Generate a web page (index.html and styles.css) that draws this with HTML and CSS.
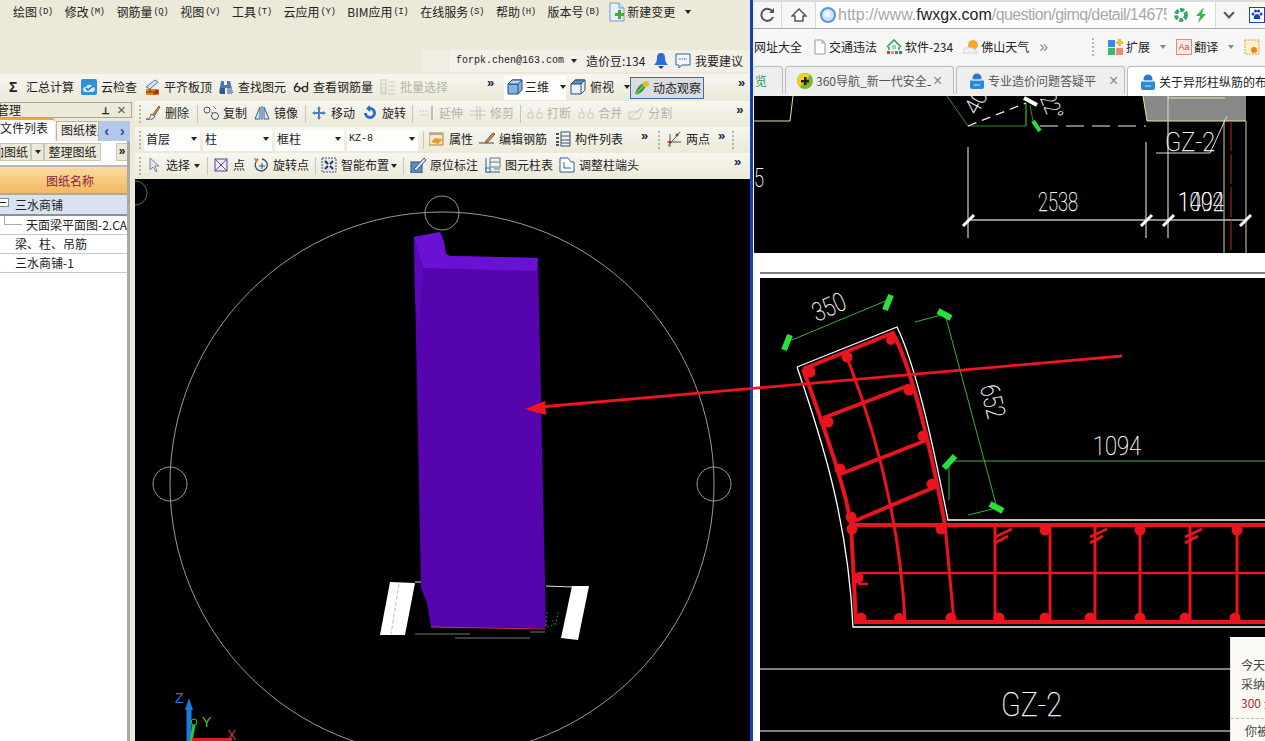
FILE: index.html
```html
<!DOCTYPE html>
<html lang="zh">
<head>
<meta charset="utf-8">
<title>钢筋算量</title>
<link rel="stylesheet" href="styles.css">
</head>
<body>
<svg class="defs" width="0" height="0">
<defs>
<symbol id="i-cloud" viewBox="0 0 16 16"><rect x="0" y="0" width="16" height="16" rx="2" fill="#2f8fd8"/><path d="M2 11c0-3 2-3 3-3 1-3 6-3 7 0 2 0 3 4 0 5H4c-1 0-2-1-2-2z" fill="#cfe8fa"/><path d="M5 9l2 2 5-4" fill="none" stroke="#1a6fb8" stroke-width="1.5"/></symbol>
<symbol id="i-align" viewBox="0 0 16 16"><rect x="2" y="10" width="13" height="6" fill="#d8861e"/><path d="M2 13h13M6 10v3M10 13v3" stroke="#8b2a10"/><rect x="11" y="11" width="3" height="4" fill="#b8281a"/><path d="M2 8L11 1l3 2-8 7z" fill="#cfe0ef" stroke="#4f7fa8"/></symbol>
<symbol id="i-find" viewBox="0 0 16 16"><path d="M3 2h3v4h3V2h3l3 12H9V9H7v5H1z" fill="#4a78b8"/><rect x="2" y="9" width="5" height="6" fill="#30588f"/><rect x="9" y="9" width="5" height="6" fill="#8a9fb8"/></symbol>
<symbol id="i-glass" viewBox="0 0 16 16"><g fill="none" stroke="#333" stroke-width="1.4"><circle cx="4" cy="10" r="2.6"/><circle cx="12" cy="10" r="2.6"/><path d="M5 4C3 5 2 7 1.500 9M14.500 3v7M7 9.500c1-.5 1-.5 2 0"/></g></symbol>
<symbol id="i-batch" viewBox="0 0 16 16"><g fill="none" stroke="#c8c8c0"><rect x="1" y="1" width="5" height="14"/><path d="M1 5h5M1 9h5M1 13h5M8 3h7M8 7h7M8 11h7M8 15h7"/></g></symbol>
<symbol id="i-cube" viewBox="0 0 16 16"><path d="M1 5l4-4h10v10l-4 4H1z" fill="#7fb4e0" stroke="#2a4f78"/><path d="M1 5h10v10M11 5l4-4" fill="none" stroke="#2a4f78"/><path d="M1 5l4-4h10l-4 4z" fill="#b4d6f0" stroke="#2a4f78"/></symbol>
<symbol id="i-cubew" viewBox="0 0 16 16"><path d="M1 5l4-4h10v10l-4 4H1z" fill="#e8f0f8" stroke="#2a4f78"/><path d="M1 5l4-4h10l-4 4z" fill="#5f90c0" stroke="#2a4f78"/><path d="M11 5v10M11 5l4-4" fill="none" stroke="#2a4f78"/></symbol>
<symbol id="i-orbit" viewBox="0 0 16 16"><path d="M1 15C2 8 6 3 12 3c0 6-4 10-11 12z" fill="#3f9a3a"/><path d="M1 15L12 3" stroke="#a8d8a0"/><circle cx="12" cy="4" r="3" fill="#e0c020"/></symbol>
<symbol id="i-brush" viewBox="0 0 16 16"><path d="M8 9L14 1l1 1-5 8z" fill="#c84" stroke="#864"/><path d="M1 14c3 0 4-1 5-5l4 2c-1 3-4 4-9 3z" fill="#e8e0f0" stroke="#657"/></symbol>
<symbol id="i-copy" viewBox="0 0 16 16"><g fill="none" stroke="#456"><circle cx="4" cy="5" r="3"/><circle cx="12" cy="11" r="3.500"/><path d="M8 7l2 1M10 1l3 3" stroke="#68a"/></g></symbol>
<symbol id="i-mirror" viewBox="0 0 16 16"><path d="M6 2v12H1z" fill="#dbe7f3" stroke="#2a5f98"/><path d="M10 2v12h5z" fill="#dbe7f3" stroke="#2a5f98"/><path d="M8 1v14" stroke="#2a5f98"/></symbol>
<symbol id="i-move" viewBox="0 0 16 16"><path d="M8 1l2 3H9v3h3V6l3 2-3 2V9H9v3h1l-2 3-2-3h1V9H4v1L1 8l3-2v1h3V4H6z" fill="#4f81b8"/></symbol>
<symbol id="i-rotate" viewBox="0 0 16 16"><path d="M8 2a6 6 0 1 1-6 6h3a3 3 0 1 0 3-3v2L4 3.500 8 0z" fill="#2a6fc0"/></symbol>
<symbol id="i-extend" viewBox="0 0 16 16"><path d="M0 6h10M0 10h10" stroke="#c8c8c0" stroke-dasharray="2 1"/><path d="M13 1v14" stroke="#c0c0b8" stroke-width="2"/></symbol>
<symbol id="i-trim" viewBox="0 0 16 16"><path d="M0 6h16M0 10h16" stroke="#c8c8c0"/><path d="M7 1v14M10 1v14" stroke="#c0c0b8"/></symbol>
<symbol id="i-break" viewBox="0 0 16 16"><path d="M1 8h5v5H1zM10 8h5v5h-5zM3 3l2 4M13 3l-2 4" fill="none" stroke="#c8c8c0"/></symbol>
<symbol id="i-split" viewBox="0 0 16 16"><path d="M1 14V7h9l3-4 2 2-4 9z" fill="none" stroke="#c8c8c0"/><path d="M1 14L13 3" stroke="#c8c8c0"/></symbol>
<symbol id="i-prop" viewBox="0 0 16 16"><path d="M0 2h14v12H0z" fill="#fbe8c0" stroke="#b08030"/><path d="M0 2h14v2H0z" fill="#a8a8b0"/><path d="M2 11l4-4 8 1-5 5z" fill="#e0a030"/></symbol>
<symbol id="i-edit" viewBox="0 0 16 16"><path d="M0 12h15" stroke="#444"/><path d="M6 11L14 2l2 1-8 9z" fill="#c89050" stroke="#753"/></symbol>
<symbol id="i-list" viewBox="0 0 16 16"><g fill="none" stroke="#456"><rect x="6" y="1" width="9" height="14" fill="#eef3f8"/><path d="M6 5h9M6 9h9M6 12h9"/><path d="M1 3h3M1 7h3M1 11h3M1 14h3" stroke-width="2"/></g></symbol>
<symbol id="i-two" viewBox="0 0 16 16"><path d="M1 11h14M4 3v13M14 1L2 15" fill="none" stroke="#555"/><circle cx="4" cy="11" r="1.500" fill="#a33"/><circle cx="11" cy="4" r="1.500" fill="#a33"/></symbol>
<symbol id="i-cursor" viewBox="0 0 16 16"><path d="M4 1v12l3-3 3 5 1-1-2-5h4z" fill="#dde4ec" stroke="#7a8a9a"/></symbol>
<symbol id="i-point" viewBox="0 0 16 16"><rect x="2" y="2" width="12" height="12" fill="#e8eef8" stroke="#3a4fa0"/><path d="M2 2l12 12M14 2L2 14" stroke="#a03a50"/></symbol>
<symbol id="i-rotp" viewBox="0 0 16 16"><path d="M3 5a6 6 0 1 0 6-3" fill="none" stroke="#2a4f78" stroke-width="1.300"/><path d="M1 1l5 1-3 4z" fill="#d08020"/><path d="M9 6v6M6 9h6" stroke="#2a4f78"/></symbol>
<symbol id="i-smart" viewBox="0 0 16 16"><rect x="1" y="1" width="14" height="14" fill="#dfe8f0" stroke="#555" stroke-dasharray="2 1"/><path d="M4 4l3 3M12 4L9 7M4 12l3-3M12 12L9 9" stroke="#334" stroke-width="2"/></symbol>
<symbol id="i-orig" viewBox="0 0 16 16"><rect x="1" y="5" width="11" height="11" fill="#5f8fc0" stroke="#2a4f78"/><path d="M4 12L14 1l2 2L6 14z" fill="#dce8f4" stroke="#2a4f78"/></symbol>
<symbol id="i-coltb" viewBox="0 0 16 16"><path d="M1 1v14h14" fill="none" stroke="#2a5f98"/><rect x="1" y="11" width="4" height="4" fill="#fff" stroke="#2a5fb0"/><rect x="5" y="1" width="10" height="9" fill="#eef3f8" stroke="#678"/><path d="M5 5h10M9 12h6" stroke="#678"/></symbol>
<symbol id="i-adj" viewBox="0 0 16 16"><path d="M1 15V1h8l3 4h3v10z" fill="#fff" stroke="#2a5f98"/><path d="M5 5v6h7" fill="none" stroke="#2a5f98"/></symbol>
<symbol id="i-new" viewBox="0 0 16 20"><path d="M1 1h9l5 5v13H1z" fill="#e6f0fa" stroke="#6f9fc8"/><path d="M10 1v5h5" fill="#cfe2f4" stroke="#6f9fc8"/><path d="M9 8h3v3h3v3h-3v3H9v-3H6v-3h3z" fill="#4aa83a"/></symbol>
<symbol id="i-bell" viewBox="0 0 16 16"><path d="M8 0c3 0 4 2 4 5 0 3 1 5 3 7H1c2-2 3-4 3-7 0-3 1-5 4-5z" fill="#2a6fd8"/><path d="M5 13h6l-3 3z" fill="#1a3f88"/></symbol>
<symbol id="i-msg" viewBox="0 0 16 16"><path d="M1 1h14v11H7l-3 3v-3H1z" fill="#f4f8fc" stroke="#2a5f98"/><path d="M4 6h8" stroke="#2a5f98" stroke-dasharray="1.500 1"/></symbol>
<symbol id="i-reload" viewBox="0 0 16 16"><path d="M13 4a6 6 0 1 0 1 6" fill="none" stroke="#555" stroke-width="2"/><path d="M10 6h5V1z" fill="#555"/></symbol>
<symbol id="i-home" viewBox="0 0 16 16"><path d="M8 2L1 9h3v5h8V9h3z" fill="#fff" stroke="#555" stroke-width="1.500"/></symbol>
<symbol id="i-globe" viewBox="0 0 16 16"><circle cx="8" cy="8" r="7" fill="#cfe4fb" stroke="#5a94d8" stroke-width="2"/><circle cx="7" cy="7" r="3" fill="#eef6ff"/></symbol>
<symbol id="i-ring" viewBox="0 0 16 16"><circle cx="8" cy="8" r="5" fill="none" stroke="#3aa86a" stroke-width="4" stroke-dasharray="4 1.500"/></symbol>
<symbol id="i-bolt" viewBox="0 0 16 16"><path d="M11 0L3 9h4l-2 7 8-9H9z" fill="#3ab84a"/></symbol>
<symbol id="i-paw" viewBox="0 0 16 16"><rect x="0" y="0" width="16" height="16" fill="#fff" stroke="#1a3fc0" stroke-width="2"/><g fill="#1a3fc0"><circle cx="4" cy="7" r="1.500"/><circle cx="12" cy="7" r="1.500"/><circle cx="6.500" cy="4" r="1.500"/><circle cx="9.500" cy="4" r="1.500"/><path d="M8 7c2 0 4 3 3 5H5c-1-2 1-5 3-5z"/></g></symbol>
<symbol id="i-doc" viewBox="0 0 16 16"><path d="M3 1h7l3 3v11H3z" fill="#fff" stroke="#999"/><path d="M10 1v3h3" fill="none" stroke="#999"/></symbol>
<symbol id="i-house" viewBox="0 0 16 16"><path d="M1 8l7-7 7 7M3 8v3M13 8v3" fill="none" stroke="#3a9a4a" stroke-width="1.500"/><rect x="6" y="6" width="4" height="4" fill="#9cc"/><path d="M1 12h3v3H1z" fill="#d83a3a"/><path d="M5 12h3v3H5z" fill="#d8a83a"/><path d="M9 12h3v3H9z" fill="#3a9a4a"/><path d="M13 12h3v3h-3z" fill="#3a6ad8"/></symbol>
<symbol id="i-sun" viewBox="0 0 16 16"><circle cx="10" cy="6" r="5" fill="#f8a830"/><path d="M0 14c0-4 3-6 6-5 2-1 5 0 6 3 2 0 3 1 3 2z" fill="#eef2f6" stroke="#c8d4e0"/></symbol>
<symbol id="i-ext" viewBox="0 0 16 16"><rect x="0" y="1" width="7" height="7" fill="#3a8ad8"/><rect x="0" y="9" width="7" height="7" fill="#3ab86a"/><rect x="8" y="9" width="7" height="7" fill="#f08878"/><path d="M10 0h3v2h2v3h-2v2h-3V5H8V2h2z" fill="#f0c030"/></symbol>
<symbol id="i-cal" viewBox="0 0 16 16"><rect x="1" y="1" width="14" height="14" fill="#fbf0c8" stroke="#d8a83a" stroke-dasharray="2 1"/><circle cx="10" cy="11" r="3" fill="#e88a20"/></symbol>
<symbol id="i-360" viewBox="0 0 16 16"><circle cx="8" cy="8" r="8" fill="#7ab82a"/><path d="M0 8a8 8 0 0 1 13-6L3 14A8 8 0 0 1 0 8z" fill="#f0d020"/><path d="M7 4h2.500v3H12v2.500H9.500V12H7V9.500H4V7h3z" fill="#222"/></symbol>
<symbol id="i-lock" viewBox="0 0 16 16"><circle cx="8" cy="5" r="4.500" fill="#2a7ac8"/><rect x="1" y="7" width="14" height="9" rx="2" fill="#2a8ad8"/><path d="M3 7h10" stroke="#cfe8fa" stroke-width="1.500"/><path d="M5 12h6" stroke="#cfe8fa"/></symbol>
</defs>
</svg>

<div class="screen">
  <section class="app">
    <header class="menubar">
      <span>绘图<i>(D)</i></span><span>修改<i>(M)</i></span><span>钢筋量<i>(Q)</i></span><span>视图<i>(V)</i></span><span>工具<i>(T)</i></span><span>云应用<i>(Y)</i></span><span>BIM应用<i>(I)</i></span><span>在线服务<i>(S)</i></span><span>帮助<i>(H)</i></span><span>版本号<i>(B)</i></span>
      <span class="newchg"><svg class="ic20"><use href="#i-new"/></svg>新建变更<b class="dd ml8"></b></span>
    </header>
    <div class="userrow">
      <div class="ublank"></div>
      <div class="ubar">
        <span class="email">forpk.chen@163.com</span><b class="dd ml7"></b>
        <span class="ml9 bean">造价豆:134</span>
        <svg class="ic ml7"><use href="#i-bell"/></svg>
        <svg class="ic ml6"><use href="#i-msg"/></svg>
        <span class="ml4">我要建议</span>
      </div>
    </div>
    <div class="tb tb1">
      <span class="tool"><b class="sigma">Σ</b>汇总计算</span>
      <span class="tool ml7"><svg class="ic"><use href="#i-cloud"/></svg>云检查</span>
      <span class="tool ml7"><svg class="ic"><use href="#i-align"/></svg>平齐板顶</span>
      <span class="tool ml6"><svg class="ic"><use href="#i-find"/></svg>查找图元</span>
      <span class="tool ml7"><svg class="ic"><use href="#i-glass"/></svg>查看钢筋量</span>
      <span class="tool off ml7"><svg class="ic"><use href="#i-batch"/></svg>批量选择</span>
      <span class="more ml39">»</span>
      <span class="tool box3d ml7"><svg class="ic"><use href="#i-cube"/></svg>三维<b class="dd ml9"></b></span>
      <span class="tool ml4"><svg class="ic"><use href="#i-cubew"/></svg>俯视<b class="dd ml6"></b></span>
      <span class="tool active"><svg class="ic"><use href="#i-orbit"/></svg>动态观察</span>
      <span class="more ml34">»</span>
    </div>

    <div class="main">
      <aside class="side">
        <div class="side-title"><span class="clip2">管理</span><span class="pin">⊥</span><span class="close">×</span></div>
        <div class="side-tabs">
          <span class="tab-on">文件列表</span>
          <span class="tab-off">图纸楼层</span>
          <span class="tab-nav"><b>‹</b><b>›</b></span>
        </div>
        <div class="side-panel">
          <div class="side-btns">
            <span class="sb sb1"><span class="clip16">添加图纸</span></span><span class="sb sb2"><b class="dd"></b></span><span class="sb sb3">整理图纸</span><span class="sb4">»</span>
          </div>
          <div class="grid-head">图纸名称</div>
          <div class="row row-sel"><span class="minus"></span>三水商铺</div>
          <div class="row row-sub"><span class="branch"></span>天面梁平面图-2.CAD</div>
          <div class="row">梁、柱、吊筋</div>
          <div class="row">三水商铺-1</div>
        </div>
      </aside>
      <div class="work">
        <div class="tb">
          <span class="hd ml4"></span>
          <span class="tool ml4"><svg class="ic"><use href="#i-brush"/></svg>删除</span>
          <span class="sep ml8"></span>
          <span class="tool ml5"><svg class="ic"><use href="#i-copy"/></svg>复制</span>
          <span class="tool ml7"><svg class="ic"><use href="#i-mirror"/></svg>镜像</span>
          <span class="sep ml7"></span>
          <span class="tool ml5"><svg class="ic"><use href="#i-move"/></svg>移动</span>
          <span class="tool ml7"><svg class="ic"><use href="#i-rotate"/></svg>旋转</span>
          <span class="sep ml6"></span>
          <span class="tool off ml6"><svg class="ic"><use href="#i-extend"/></svg>延伸</span>
          <span class="tool off ml7"><svg class="ic"><use href="#i-trim"/></svg>修剪</span>
          <span class="sep ml6"></span>
          <span class="tool off ml6"><svg class="ic"><use href="#i-break"/></svg>打断</span>
          <span class="tool off ml7"><svg class="ic"><use href="#i-break"/></svg>合并</span>
          <span class="tool off ml6"><svg class="ic"><use href="#i-split"/></svg>分割</span>
          <span class="more ml64">»</span>
        </div>
        <div class="tb">
          <span class="hd ml4"></span>
          <span class="sel w56 ml3">首层<b class="dd"></b></span>
          <span class="sel w69 ml3">柱<b class="dd"></b></span>
          <span class="sel w69 ml3">框柱<b class="dd"></b></span>
          <span class="sel w71 ml3 mono">KZ-8<b class="dd"></b></span>
          <span class="sep ml5"></span>
          <span class="tool ml5"><svg class="ic"><use href="#i-prop"/></svg>属性</span>
          <span class="tool ml6"><svg class="ic"><use href="#i-edit"/></svg>编辑钢筋</span>
          <span class="tool ml8"><svg class="ic"><use href="#i-list"/></svg>构件列表</span>
          <span class="more ml18">»</span>
          <span class="hd ml7"></span>
          <span class="tool ml6"><svg class="ic"><use href="#i-two"/></svg>两点</span>
          <span class="more ml8">»</span>
          <span class="hd ml4"></span>
        </div>
        <div class="tb">
          <span class="hd ml4"></span>
          <span class="tool ml5"><svg class="ic"><use href="#i-cursor"/></svg>选择</span><b class="dd ml4"></b>
          <span class="sep ml7"></span>
          <span class="tool ml5"><svg class="ic"><use href="#i-point"/></svg>点</span>
          <span class="tool ml8"><svg class="ic"><use href="#i-rotp"/></svg>旋转点</span>
          <span class="sep ml6"></span>
          <span class="tool ml5"><svg class="ic"><use href="#i-smart"/></svg>智能布置</span><b class="dd ml2"></b>
          <span class="sep ml6"></span>
          <span class="tool ml6"><svg class="ic"><use href="#i-orig"/></svg>原位标注</span>
          <span class="tool ml7"><svg class="ic"><use href="#i-coltb"/></svg>图元柱表</span>
          <span class="tool ml6"><svg class="ic"><use href="#i-adj"/></svg>调整柱端头</span>
          <span class="more ml95">»</span>
        </div>
        <svg class="canvas" viewBox="135 179 615 562">
          <rect x="135" y="179" width="615" height="562" fill="#000"/>
          <path d="M135 181a12 12 0 0 1 0 24" fill="none" stroke="#2a8a3a"/>
          <g fill="none" stroke="#9a9a9a">
            <circle cx="442" cy="484" r="272"/>
            <circle cx="442" cy="213" r="17"/>
            <circle cx="170" cy="484" r="17"/>
            <circle cx="714" cy="484" r="17"/>
          </g>
          <path d="M390 582L415 583 405 635H380z" fill="#fff"/>
          <path d="M399 584L391 634" stroke="#bbb" stroke-dasharray="4 2"/>
          <path d="M572 586H589L578 640 561 638z" fill="#fff"/>
          <path d="M415 582L430 582M546 586L572 587" stroke="#ddd"/>
          <path d="M414 237L440 232 444 242 446 254 450 256 538 258 546 628 431 627 427 603 421 588z" fill="#5504ae"/>
          <path d="M414 237L440 232 444 242 446 254 450 256 538 258 536 271 423 268z" fill="#6a12d4"/>
          <path d="M414 237L423 268 419 330 415 300z" fill="#5c08bc"/>
          <path d="M431 627L545 629" stroke="#d83050"/>
          <path d="M415 634H470M455 638H530M530 632H545" stroke="#777"/>
          <path d="M547 612l-1 15 10-3 2-12M552 620l4 5" fill="none" stroke="#2a7a3a" stroke-dasharray="2 2"/>
          <g class="axis">
            <text x="175" y="703" fill="#2a7ad8" font-size="14">Z</text>
            <path d="M189 741V710" stroke="#1a7ae0" stroke-width="5"/>
            <path d="M189 698l-4 12h8z" fill="#1a7ae0"/>
            <path d="M191 741L194 725" stroke="#2ac83a" stroke-width="3"/>
            <circle cx="194" cy="722" r="3" fill="none" stroke="#2ac83a"/>
            <text x="202" y="727" fill="#3ac84a" font-size="14">Y</text>
            <path d="M192 740H232" stroke="#e01a1a" stroke-width="4"/>
            <text x="227" y="740" fill="#c83a3a" font-size="14">X</text>
          </g>
        </svg>
      </div>
    </div>
  </section>

  <div class="divider"></div>

  <section class="browser">
    <div class="addr">
      <svg class="ic ml6"><use href="#i-reload"/></svg>
      <span class="vsep ml6"></span>
      <svg class="ic ml9"><use href="#i-home"/></svg>
      <div class="url">
        <svg class="ic"><use href="#i-globe"/></svg>
        <span class="urltext">http://www.<em>fwxgx.com</em><span class="tail">/question/gimq/detail/146753</span></span>
        <svg class="ic ml6"><use href="#i-ring"/></svg>
        <svg class="ic ml4"><use href="#i-bolt"/></svg>
      </div>
      <span class="chev"></span>
      <svg class="ic ml6 paw"><use href="#i-paw"/></svg>
    </div>
    <div class="bms">
      <span class="clip1">网址大全</span>
      <svg class="ic ml10"><use href="#i-doc"/></svg><span class="ml1">交通违法</span>
      <svg class="ic ml9"><use href="#i-house"/></svg><span class="ml3 mix">软件-234</span>
      <svg class="ic ml10"><use href="#i-sun"/></svg><span class="ml2">佛山天气</span>
      <span class="bmore ml10">»</span>
      <span class="hd ml44"></span>
      <svg class="ic ml14"><use href="#i-ext"/></svg><span class="ml2">扩展</span><b class="dd ml10 gray"></b>
      <span class="aa ml10">Aa</span><span class="ml2">翻译</span><b class="dd ml10 gray"></b>
      <svg class="ic ml10"><use href="#i-cal"/></svg>
    </div>
    <div class="tabs">
      <span class="btab b0">览</span>
      <span class="btab b1"><svg class="ic"><use href="#i-360"/></svg><span class="tname">360导航_新一代安全上网导航</span><span class="x">×</span></span>
      <span class="btab b2"><svg class="ic"><use href="#i-lock"/></svg><span class="tname">专业造价问题答疑平台</span><span class="x">×</span></span>
      <span class="btab b3"><svg class="ic"><use href="#i-lock"/></svg><span class="tname">关于异形柱纵筋的布置</span></span>
    </div>
    <div class="page">
      <svg class="cad" viewBox="753 96 512 645">
        <rect x="753" y="96" width="512" height="645" fill="#fff"/>
        <rect x="754" y="96" width="511" height="157" fill="#000"/>
        <path d="M760 273H1265" stroke="#000"/>
        <rect x="760" y="278" width="505" height="463" fill="#000"/>

        <!-- upper drawing -->
        <path d="M754 121H790L793 96" fill="none" stroke="#e8e89a"/>
        <path d="M947 96L968 126H1026V103M1026 103V126" fill="none" stroke="#3a8a3a"/>
        <path d="M968 126L1026 103" stroke="#eee" stroke-dasharray="9 6" stroke-width="1.300"/>
        <path d="M1024 98L1037 105" stroke="#fff" stroke-width="4"/>
        <path d="M1033 121L1040 131" stroke="#2ae03a" stroke-width="4"/>
        <path d="M1030 105L1033 121" stroke="#3a8a3a"/>
        <path d="M1040 126H1146" stroke="#eee" stroke-dasharray="18 8" stroke-width="1.200"/>
        <path d="M1143 96L1147 121H1246V96z" fill="#888"/>
        <path d="M1143 96L1147 121M1147 121H1246M1168 96V98H1225" fill="none" stroke="#e8e89a"/>
        <path d="M968 147V238M1146 142V238M1168 96V238" stroke="#ccc" stroke-width="1.200"/>
        <path d="M968 220H1245" stroke="#bbb" stroke-width="1.500"/>
        <path d="M1224 121V253M1246 121V253" stroke="#d8d09a"/>
        <path d="M1231 121V253" stroke="#b82a2a" stroke-dasharray="30 3"/>
        <path d="M1156 153H1210M1227 116L1210 153" stroke="#ddd"/>
        <g stroke="#fff" stroke-width="3">
          <path d="M963 226L974 215M1141 226L1152 215M1163 226L1174 215M1240 226L1251 215"/>
        </g>
        <g class="cadt">
          <text x="1038" y="211" font-size="25" textLength="40" lengthAdjust="spacingAndGlyphs">2538</text>
          <text x="1178" y="211" font-size="25" textLength="46" lengthAdjust="spacingAndGlyphs">1402</text>
          <text x="1178" y="211" font-size="25" textLength="46" lengthAdjust="spacingAndGlyphs">1094</text>
          <text x="1165" y="151" font-size="26" textLength="50" lengthAdjust="spacingAndGlyphs">GZ-2</text>
          <text x="754" y="187" font-size="25" textLength="10" lengthAdjust="spacingAndGlyphs">5</text>
          <text transform="translate(977 116) rotate(-62)" font-size="22" textLength="24" lengthAdjust="spacingAndGlyphs">40</text>
          <text transform="translate(1040 98) rotate(68)" font-size="22" textLength="25" lengthAdjust="spacingAndGlyphs">22°</text>
          <text x="1093" y="455" font-size="26" textLength="48" lengthAdjust="spacingAndGlyphs">1094</text>
          <text x="1001" y="716" font-size="33" textLength="61" lengthAdjust="spacingAndGlyphs">GZ-2</text>
          <text transform="translate(817 322) rotate(-24)" font-size="26" textLength="34" lengthAdjust="spacingAndGlyphs">350</text>
          <text transform="translate(980 387) rotate(76)" font-size="26" textLength="34" lengthAdjust="spacingAndGlyphs">652</text>
        </g>

        <!-- lower drawing -->
        <path d="M760 669H1265M760 731H1265" stroke="#fff"/>
        <path d="M797 367L897 327C918 370 936 460 948 520H1265M797 367C822 440 848 520 853 627H1265" fill="none" stroke="#fff" stroke-width="1.300"/>
        <path d="M787 342L888 300M915 322L945 314 997 508 968 515M949 500V461H1265" fill="none" stroke="#3ac83a" stroke-width=".9"/>
        <g stroke="#2ae03a" stroke-width="6">
          <path d="M790 335L784 350M891 295L885 310M938 311L951 318M990 504L1003 511M955 456L944 468"/>
        </g>
        <g fill="none" stroke="#e8141e" stroke-width="4">
          <path d="M803 369L893 333C915 375 935 470 945 525M803 369C825 430 846 490 851 525L856 622H1265M851 525H1265"/>
          <path d="M823 418L910 385M838 475L927 440M852 522L935 487" />
          <path d="M847 357C875 430 900 520 905 622M945 525L954 622M995 525V622M1050 525V622M1095 525V622M1140 525V622M1190 525V622M1237 525V622" stroke-width="3"/>
          <path d="M858 573H1265M858 584H868" stroke-width="2.500"/>
          <path d="M995 537L1012 529M995 543L1008 536M1090 537L1107 529M1090 543L1103 536M1185 537L1202 529M1185 543L1198 536" stroke-width="3"/>
        </g>
        <g fill="#e8141e">
          <circle cx="810" cy="372" r="5.500"/><circle cx="847" cy="357" r="5.500"/><circle cx="891" cy="340" r="5"/>
          <circle cx="909" cy="390" r="5.500"/><circle cx="828" cy="422" r="5.500"/><circle cx="923" cy="436" r="5.500"/>
          <circle cx="840" cy="469" r="5.500"/><circle cx="932" cy="484" r="5.500"/><circle cx="851" cy="517" r="5.500"/>
          <circle cx="852" cy="529" r="5.500"/><circle cx="941" cy="529" r="5.500"/><circle cx="858" cy="578" r="5.500"/>
          <circle cx="861" cy="618" r="5.500"/><circle cx="899" cy="618" r="5"/><circle cx="951" cy="618" r="5.500"/>
          <circle cx="999" cy="618" r="5.500"/><circle cx="1045" cy="618" r="5.500"/><circle cx="1090" cy="618" r="5.500"/>
          <circle cx="1140" cy="618" r="5.500"/><circle cx="1185" cy="618" r="5.500"/><circle cx="1235" cy="618" r="5.500"/>
          <circle cx="1045" cy="530" r="5.500"/><circle cx="1140" cy="530" r="5.500"/><circle cx="1237" cy="530" r="5.500"/>
        </g>
      </svg>
      <div class="popup">
        <p>今天还可采纳</p>
        <p>采纳</p>
        <p class="red">300 元</p>
        <p class="you">你被采纳</p>
      </div>
    </div>
  </section>
</div>
<svg class="arrow" viewBox="0 0 1265 741">
  <path d="M1122 356L540 407" stroke="#f0141e" stroke-width="2.800"/>
  <path d="M525 409L545 401 546 415z" fill="#f0141e"/>
</svg>
</body>
</html>
```
FILE: styles.css
```css
* { box-sizing: border-box; }
html, body { margin: 0; height: 741px; overflow: hidden; }
body {
  position: relative;
  font: 12px/16px "Noto Sans CJK SC", "Liberation Sans", sans-serif;
  color: #222;
  background: #ece9d8;
}
.defs { position: absolute; }
.screen { display: flex; width: 1265px; height: 741px; }
.app { width: 750px; flex: none; display: flex; flex-direction: column; background: #ece9d8; }
.divider { width: 3px; flex: none; background: #1040c0; }
.browser { flex: 1; min-width: 0; display: flex; flex-direction: column; background: #f4f4f4; }

.ic { width: 16px; height: 16px; flex: none; display: block; }
.ic20 { width: 16px; height: 20px; flex: none; display: block; }
.dd { display: inline-block; width: 0; height: 0; flex: none; border: 3px solid transparent; border-top: 4px solid #222; border-bottom: 0; }
.dd.gray { border-top-color: #888; }

.ml1 { margin-left: 1px; }
.ml2 { margin-left: 2px; } .ml3 { margin-left: 3px; } .ml4 { margin-left: 4px; }
.ml5 { margin-left: 5px; } .ml6 { margin-left: 6px; } .ml7 { margin-left: 7px; }
.ml8 { margin-left: 8px; } .ml9 { margin-left: 9px; } .ml10 { margin-left: 10px; }
.ml14 { margin-left: 14px; } .ml18 { margin-left: 18px; } .ml44 { margin-left: 44px; }
.ml34 { margin-left: 34px; } .ml39 { margin-left: 39px; } .ml64 { margin-left: 64px; }
.ml95 { margin-left: 95px; }

.menubar { height: 45px; padding: 4px 0 0 13px; display: flex; align-items: flex-start; gap: 12px; white-space: nowrap; }
.menubar > span { display: flex; align-items: center; height: 16px; }
.menubar i { font: 9px/16px "Liberation Mono", monospace; margin-left: 1px; letter-spacing: -.5px; }
.newchg { gap: 2px; margin-left: -2px; }

.userrow { height: 29px; padding-top: 5px; display: flex; }
.ublank { width: 26px; margin-left: 422px; height: 22px; background: #f1efe3; }
.ubar { flex: 1; margin-left: 1px; height: 22px; padding-left: 7px; display: flex; align-items: center; background: #f3f1e7; white-space: nowrap; }
.email { font: 10px/16px "Liberation Mono", monospace; }
.bean { width: 60px; }

.tb { height: 26px; flex: none; display: flex; align-items: center; white-space: nowrap; background: linear-gradient(#f7f6f0, #ece9d8); }
.tb1 { height: 27px; padding-left: 9px; }
.tool { display: flex; align-items: center; gap: 4px; height: 22px; flex: none; padding-bottom: 2px; }
.off { color: #b4b4ac; }
.sigma { width: 13px; font: bold 14px/16px "Liberation Sans", sans-serif; }
.more { align-self: flex-start; width: 10px; margin-top: 2px; font: bold 13px/14px "Liberation Sans", sans-serif; color: #223; }
.box3d { background: #fdfdfb; width: 62px; height: 24px; padding-left: 3px; gap: 2px; }
.active { width: 74px; height: 22px; padding-left: 3px; padding-bottom: 0; gap: 3px; background: #d9dde2; border: 1px solid #3c6ea5; }
.hd { width: 2px; height: 18px; flex: none; background: repeating-linear-gradient(#b8b6a8 0 2px, transparent 2px 4px); }
.sep { width: 1px; height: 18px; flex: none; background: #c8c6b8; }
.sel { display: flex; align-items: center; justify-content: space-between; height: 21px; padding: 0 2px 2px 2px; background: #fdfdfb; flex: none; }
.sel .dd { margin-right: 1px; }
.w56 { width: 56px; } .w69 { width: 69px; } .w71 { width: 71px; }
.mono { font: 10px/16px "Liberation Mono", monospace; }

.main { flex: 1; min-height: 0; display: flex; }
.side { width: 135px; flex: none; padding-top: 1px; overflow: hidden; display: flex; flex-direction: column; }
.side-title { width: 132px; height: 16px; display: flex; align-items: center; border: 1px solid #a8a698; background: #ece9d8; }
.clip2 { margin-left: -4px; flex: 1; }
.pin { width: 16px; font: bold 11px/14px "Liberation Sans", sans-serif; }
.close { width: 14px; font: 15px/14px "Liberation Sans", sans-serif; color: #555; }
.side-tabs { width: 130px; height: 23px; display: flex; align-items: flex-end; overflow: hidden; }
.tab-on { width: 55px; height: 23px; background: #fff; border-top: 2px solid #f0a830; border-radius: 0 4px 0 0; white-space: nowrap; }
.tab-off { width: 43px; height: 20px; margin-left: 1px; padding: 0 0 0 4px; overflow: hidden; white-space: nowrap; background: #f4f2e8; border: 1px solid #b8b6a8; border-bottom: 0; }
.tab-nav { width: 31px; height: 20px; display: flex; justify-content: space-around; align-items: center; background: #b4c8ee; color: #3050a0; font: bold 15px/16px "Liberation Sans", sans-serif; }
.side-panel { width: 130px; flex: 1; background: #fff; border-right: 3px solid #a8a8a8; overflow: hidden; }
.side-btns { height: 26px; padding-top: 2px; display: flex; align-items: flex-start; border-bottom: 2px solid #b8b8b8; white-space: nowrap; }
.sb { height: 18px; background: #ece9d8; border: 1px solid #c8c6b8; flex: none; display: flex; align-items: center; justify-content: center; }
.sb1 { width: 31px; overflow: hidden; justify-content: flex-end; padding-right: 2px; }
.clip16 { flex: none; }
.sb2 { width: 13px; }
.sb3 { width: 57px; }
.sb4 { width: 12px; margin-left: 15px; height: 18px; border: 1px solid #c8c6b8; background: #ece9d8; font: bold 12px/14px "Liberation Sans", sans-serif; text-align: center; flex: none; }
.grid-head { height: 28px; line-height: 27px; padding-left: 13px; text-align: center; color: #8b1a4a; background: linear-gradient(#fbdca0, #f4b860); border-bottom: 2px solid #a8a8a8; }
.row { height: 19px; line-height: 18px; padding-left: 15px; border-bottom: 1px solid #c8c8c8; white-space: nowrap; overflow: hidden; position: relative; }
.row-sel { height: 21px; background: #d8e2f2; display: flex; align-items: center; border-bottom: 2px solid #909090; }
.row-sub { padding-left: 26px; }
.minus { position: absolute; left: 0; top: 3px; width: 9px; height: 9px; background: #fff; border: 1px solid #888; border-left: 0; }
.minus::after { content: ""; position: absolute; left: 0; top: 3px; width: 6px; height: 1px; background: #222; }
.branch { position: absolute; left: 4px; top: -3px; width: 18px; height: 12px; border-left: 1px solid #aaa; border-bottom: 1px solid #aaa; }

.work { flex: 1; min-width: 0; display: flex; flex-direction: column; }
.canvas { flex: 1; min-height: 0; width: 615px; display: block; background: #000; }
.canvas text { font-family: "Liberation Sans", sans-serif; }

.addr { height: 29px; flex: none; display: flex; align-items: center; background: #f6f6f6; border-top: 2px solid #dcdcdc; border-bottom: 1px solid #aaa; overflow: hidden; }
.vsep { width: 1px; height: 26px; flex: none; background: #d8d8d8; }
.url { width: 401px; height: 26px; margin-left: 8px; padding-left: 4px; flex: none; display: flex; align-items: center; background: #fff; border-left: 1px solid #d8d8d8; border-right: 1px solid #d8d8d8; }
.urltext { width: 329px; margin-left: 2px; overflow: hidden; white-space: nowrap; font: 16px/20px "Liberation Sans", sans-serif; color: #a8a8a8; flex: none; }
.urltext em { font-style: normal; color: #222; }
.tail { letter-spacing: -.6px; }
.chev { width: 8px; height: 8px; flex: none; margin: -4px 0 0 9px; border-right: 2px solid #555; border-bottom: 2px solid #555; transform: rotate(45deg); }
.paw { margin-left: 16px; }

.bms { height: 36px; flex: none; display: flex; align-items: center; white-space: nowrap; overflow: hidden; background: #f6f6f6; }
.clip1 { margin-left: 1px; }
.mix { letter-spacing: 0; }
.bmore { font: 16px/16px "Liberation Sans", sans-serif; color: #888; }
.aa { width: 16px; height: 16px; flex: none; background: #fbe8e8; border: 1px solid #d88; color: #c44; font: 9px/14px "Liberation Sans", sans-serif; text-align: center; }

.tabs { height: 31px; flex: none; display: flex; align-items: flex-start; overflow: hidden; background: #f0f0f0; padding-top: 1px; white-space: nowrap; }
.btab { height: 28px; flex: none; display: flex; align-items: center; background: #eeeeee; border: 1px solid #bcbcbc; border-bottom: 0; border-radius: 4px 4px 0 0; margin-right: 2px; }
.b0 { width: 30px; padding-left: 2px; justify-content: flex-start; color: #2a9a5a; border-left: 0; }
.b1 { width: 169px; padding-left: 11px; }
.b2 { width: 169px; padding-left: 12px; }
.b3 { width: 140px; padding-left: 12px; height: 30px; background: #fff; margin-right: 0; }
.tname { margin-left: 3px; width: 115px; overflow: hidden; color: #555; flex: none; }
.b2 .tname { width: 108px; margin-right: 11px; }
.b3 .tname { color: #222; width: 125px; }
.x { font: 16px/16px "Liberation Sans", sans-serif; color: #888; margin-left: 2px; }

.page { flex: 1; min-height: 0; position: relative; overflow: hidden; background: #fff; }
.cad { display: block; width: 512px; height: 645px; }
.cadt text { font-family: Roboto, "Liberation Sans", sans-serif; font-weight: 100; fill: #fff; stroke: #fff; stroke-width: .25px; }
.popup { position: absolute; left: 477px; top: 541px; width: 200px; height: 110px; padding-top: 20px; background: #fbfaf4; border-left: 1px solid #e8e4d4; white-space: nowrap; }
.popup p { margin: 0 0 3px 10px; color: #444; }
.popup .red { color: #c01a2a; }
.popup .you { margin: 7px 0 0; padding: 4px 0 0 14px; border-top: 1px dashed #c0b8a8; }

.arrow { position: absolute; left: 0; top: 0; width: 1265px; height: 741px; pointer-events: none; }
```
